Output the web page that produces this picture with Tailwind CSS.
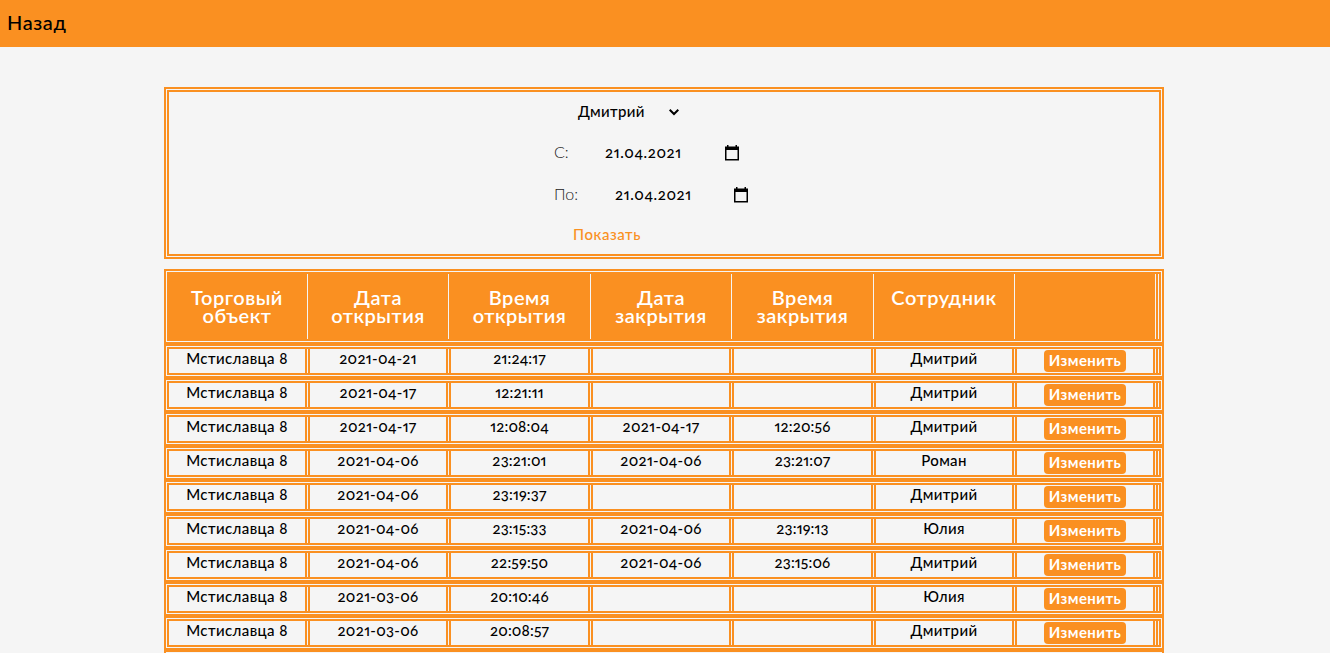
<!DOCTYPE html>
<html lang="ru">
<head>
<meta charset="utf-8">
<title>Смены</title>
<script src="https://cdn.jsdelivr.net/npm/@tailwindcss/browser@4"></script>
</head>
<body class="h-[653px] overflow-hidden bg-[#f5f5f5] font-['Lato',sans-serif] text-[15px] font-medium text-black oldstyle-nums proportional-nums">
<header class="flex h-[47px] items-center bg-[#fa9021] pb-1 pl-[7px] text-[20px] tracking-[0.6px]"><a class="leading-6">Назад</a></header>
<main class="ml-[164px] w-[1000px] pt-10">
  <form class="flex h-[172px] flex-col border-[5px] border-double border-[#fa9021] pl-[385px]">
    <div class="mt-[9px] flex h-5 items-center pl-6">
      <span class="w-[90px] tracking-[0.35px]">Дмитрий</span>
      <svg class="mt-0.5 h-2 w-3" viewBox="0 0 12 8" fill="none" stroke="#000" stroke-width="2"><path d="M1.700 1.800 6 6l4.300-4.200"/></svg>
    </div>
    <div class="mt-[21px] flex h-5 items-center">
      <span class="w-[51px] text-[16px] font-light text-[#222]">С:</span>
      <span class="w-[119px] tracking-[0.6px]">21.04.2021</span>
      <svg class="mt-0.5 h-4 w-4" viewBox="0 0 16 16"><path d="M3 0h1.500v2H3zM11.500 0H13v2h-1.500zM1 1.500h14V5H1z"/><path d="M1.750 4v10.750h12.500V4" fill="none" stroke="#000" stroke-width="1.500"/></svg>
    </div>
    <div class="mt-[22px] flex h-5 items-center">
      <span class="w-[61px] text-[16px] font-light text-[#222]">По:</span>
      <span class="w-[118px] tracking-[0.6px]">21.04.2021</span>
      <svg class="mt-0.5 h-4 w-4" viewBox="0 0 16 16"><path d="M3 0h1.500v2H3zM11.500 0H13v2h-1.500zM1 1.500h14V5H1z"/><path d="M1.750 4v10.750h12.500V4" fill="none" stroke="#000" stroke-width="1.500"/></svg>
    </div>
    <div class="mt-[20px] flex h-5 items-center pl-[19px] tracking-[0.55px] text-[#fa9021]">Показать</div>
  </form>
  <section id="table" class="mt-[10px]">
    <div class="grid h-[75px] grid-cols-[141px_141px_142px_141px_142px_141px_141px] border-[5px] border-double border-[#fa9021] text-center text-[20px] leading-[18px] font-semibold tracking-[0.5px] text-white [&>div]:border-r-[5px] [&>div]:border-double [&>div]:border-[#fa9021] [&>div]:bg-[#fa9021] [&>div]:bg-clip-padding [&>div]:pt-[14px]">
      <div>Торговый<br>объект</div><div>Дата<br>открытия</div><div>Время<br>открытия</div><div>Дата<br>закрытия</div><div>Время<br>закрытия</div><div>Сотрудник</div><div></div>
    </div>
  </section>
</main>
<template id="row">
  <div class="grid h-[34px] grid-cols-[141px_141px_142px_141px_142px_141px_141px] border-[5px] border-double border-[#fa9021] text-center leading-[18px] [&>div]:border-r-[5px] [&>div]:border-double [&>div]:border-[#fa9021]">
    <div class="tracking-[0.4px]"></div><div class="tracking-[0.3px]"></div><div class="tracking-[0.15px]"></div><div class="tracking-[0.3px]"></div><div class="tracking-[0.15px]"></div><div class="tracking-[0.35px]"></div>
    <div class="flex justify-center pt-px"><button class="h-[22px] w-[82px] rounded bg-[#fa9021] pb-0.5 leading-5 font-bold tracking-[0.4px] text-white">Изменить</button></div>
  </div>
</template>
<script>
const shifts = [
  ['2021-04-21','21:24:17','','','Дмитрий'],
  ['2021-04-17','12:21:11','','','Дмитрий'],
  ['2021-04-17','12:08:04','2021-04-17','12:20:56','Дмитрий'],
  ['2021-04-06','23:21:01','2021-04-06','23:21:07','Роман'],
  ['2021-04-06','23:19:37','','','Дмитрий'],
  ['2021-04-06','23:15:33','2021-04-06','23:19:13','Юлия'],
  ['2021-04-06','22:59:50','2021-04-06','23:15:06','Дмитрий'],
  ['2021-03-06','20:10:46','','','Юлия'],
  ['2021-03-06','20:08:57','','','Дмитрий']
];
const table = document.getElementById('table'), row = document.getElementById('row');
for (const s of shifts) {
  const r = row.content.cloneNode(true);
  ['Мстиславца 8', ...s].forEach((v, i) => r.firstElementChild.children[i].textContent = v);
  table.append(r);
}
</script>
<div class="ml-[164px] h-[34px] w-[1000px] border-[5px] border-double border-[#fa9021]"></div>
</body>
</html>
